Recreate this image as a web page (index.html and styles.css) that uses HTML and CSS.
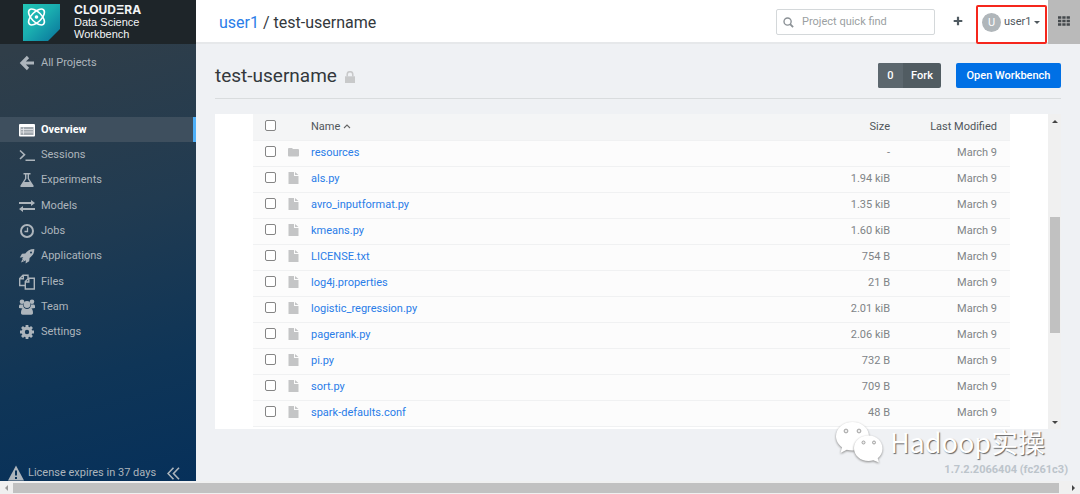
FILE: index.html
```html
<!DOCTYPE html>
<html lang="en">
<head>
<meta charset="utf-8">
<title>test-username - Cloudera Data Science Workbench</title>
<link rel="stylesheet" href="styles.css">
</head>
<body>
<div class="app">
  <aside class="sidebar">
    <div class="brand">
      <svg class="brand-logo" viewBox="0 0 37 37" aria-hidden="true">
        <defs><linearGradient id="lg" x1="0" y1="0" x2="1" y2="1"><stop offset="0" stop-color="#22c5b5"/><stop offset=".45" stop-color="#1aaeb0"/><stop offset="1" stop-color="#08729a"/></linearGradient></defs>
        <path d="M0 0h37v25L25 37H0z" fill="url(#lg)"/>
        <g fill="none" stroke="#fff" stroke-width="1.6">
          <ellipse cx="13.500" cy="13" rx="10" ry="5" transform="rotate(45 13.5 13)"/>
          <ellipse cx="13.500" cy="13" rx="10" ry="5" transform="rotate(-45 13.5 13)"/>
        </g>
        <circle cx="13.500" cy="13" r="1.800" fill="#fff"/>
      </svg>
      <div class="brand-text"><strong>CLOUDΞRA</strong><span>Data Science</span><span>Workbench</span></div>
    </div>
    <a class="nav-link all-projects" href="#">
      <svg class="icon" viewBox="0 0 16 16"><path d="M9 2L3 8l6 6M3.500 8H15" fill="none" stroke="currentColor" stroke-width="3.200"/></svg>All Projects</a>
    <nav class="nav">
      <a class="nav-link active" href="#"><svg class="icon" viewBox="0 0 16 16"><rect y="2" width="16" height="12.500" rx="1" fill="#fff"/><path d="M1.500 5h13v8h-13z" fill="#a2a9af"/><path d="M2 7.500h12M2 10h12M4.500 5.500v7" stroke="#e8eaec" stroke-width=".8"/></svg>Overview</a>
      <a class="nav-link" href="#"><svg class="icon" viewBox="0 0 16 16"><path d="M1 3.500l4.500 4.200L1 12M6.500 13.200H16" fill="none" stroke="currentColor" stroke-width="1.600"/></svg>Sessions</a>
      <a class="nav-link" href="#"><svg class="icon" viewBox="0 0 16 16"><path d="M4.500 1h7v1.500H10v4l4.500 7c.5.900 0 1.500-.8 1.500H2.300c-.8 0-1.300-.6-.8-1.500L6 6.500v-4H4.500z" fill="currentColor"/><path d="M7.400 2.500v4.300L5.300 10h5.400L8.600 6.800V2.500z" fill="#213a50"/></svg>Experiments</a>
      <a class="nav-link" href="#"><svg class="icon" viewBox="0 0 16 16"><path d="M0 4h12V2l4 3-4 3V6H0zM16 10H4V8l-4 3 4 3v-2h12z" fill="currentColor"/></svg>Models</a>
      <a class="nav-link" href="#"><svg class="icon" viewBox="0 0 16 16"><circle cx="8" cy="8" r="6" fill="none" stroke="currentColor" stroke-width="2"/><path d="M8.500 4.500v4H5.500" fill="none" stroke="currentColor" stroke-width="1.300"/></svg>Jobs</a>
      <a class="nav-link" href="#"><svg class="icon" viewBox="0 0 16 16"><path d="M15.300 1c-4.500 0-7 2-9 4.500L3 5.800.8 9.500l3.500-.3L3 11l2.300 2.200 1.600-1-.3 3.300 3.600-2.200.4-3.400C13.500 7.800 15.500 5.500 15.300 1z" fill="currentColor"/><path d="M3.300 11.500L2 14.600l3-1.400z" fill="currentColor"/><circle cx="12" cy="4.500" r="1" fill="#1b3a56"/></svg>Applications</a>
      <a class="nav-link" href="#"><svg class="icon" viewBox="0 0 16 16"><path d="M6 11.500H.7V4.500L4 1.200h5v3M4.300 1.200v3.600H.8M6.300 15V7.500l3.200-3.200h5.800V15zM9.800 4.500V8H6.500" fill="none" stroke="currentColor" stroke-width="1.400"/></svg>Files</a>
      <a class="nav-link" href="#"><svg class="icon" viewBox="0 0 16 16"><g fill="currentColor"><circle cx="3" cy="2.800" r="2.300"/><circle cx="13" cy="2.800" r="2.300"/><circle cx="8" cy="5.500" r="3.400"/><path d="M0 9V7c0-1 .7-1.600 1.500-1.600h2.600c0 1.700.5 2.600 1.200 3.400L3.500 9.400zM16 9V7c0-1-.7-1.600-1.500-1.600h-2.600c0 1.700-.5 2.600-1.200 3.400l1.800.6zM2 14c0-3 .7-5 3.300-5 1.500 1.200 3.900 1.200 5.400 0C13.300 9 14 11 14 14c0 1-.7 1.700-1.700 1.700H3.700C2.700 15.700 2 15 2 14z"/></g></svg>Team</a>
      <a class="nav-link" href="#"><svg class="icon" viewBox="0 0 16 16"><circle cx="8" cy="8" r="3.800" fill="none" stroke="currentColor" stroke-width="3.200"/><path d="M8 1v2.500M8 12.500V15M1 8h2.500M12.500 8H15M3 3l1.800 1.800M11.200 11.200L13 13M13 3l-1.800 1.800M4.800 11.200L3 13" stroke="currentColor" stroke-width="2.800"/></svg>Settings</a>
    </nav>
    <div class="license">
      <svg class="icon" viewBox="0 0 16 16"><path d="M8 .5l8 15H0z" fill="currentColor"/><path d="M8 5.500v5M8 12v2" stroke="#0b3358" stroke-width="2"/></svg>
      <span>License expires in 37 days</span>
      <button class="collapse" aria-label="Collapse sidebar"><svg viewBox="0 0 13 13"><path d="M6.500 .7L1 6.500l5.500 5.800M12 .7L6.500 6.500 12 12.300" fill="none" stroke="currentColor" stroke-width="1.600"/></svg></button>
    </div>
  </aside>

  <div class="content">
    <header class="topbar">
      <div class="crumbs"><a href="#">user1</a> / test-username</div>
      <label class="search">
        <svg viewBox="0 0 12 12" aria-hidden="true"><circle cx="5" cy="5" r="3.900" fill="none" stroke="#8b9196" stroke-width="1.500"/><path d="M7.800 7.800L11 11" stroke="#8b9196" stroke-width="2"/></svg>
        <input type="text" placeholder="Project quick find" aria-label="Project quick find">
      </label>
      <button class="add" aria-label="Add"><svg viewBox="0 0 10 10"><path d="M5 .7v8.600M.7 5h8.600" stroke="#505b62" stroke-width="2.200"/></svg></button>
      <button class="user"><span class="avatar">U</span><span>user1</span><span class="caret"></span></button>
      <button class="apps" aria-label="Applications menu"><svg viewBox="0 0 12 10"><path d="M0 1.500h12M0 5h12M0 8.500h12" stroke="#454a4d" stroke-width="2.400" stroke-dasharray="3.300 1"/></svg></button>
    </header>

    <main class="main">
      <div class="title-row">
        <h1>test-username</h1>
        <svg class="lock" viewBox="0 0 10 12" aria-label="Private"><path d="M0 5.300h10V12H0z" fill="#c8c9ca"/><path d="M2.200 5.500V3.500a2.800 2.800 0 0 1 5.600 0v2" fill="none" stroke="#c8c9ca" stroke-width="1.500"/></svg>
        <button class="fork"><span class="fork-count">0</span><span class="fork-label">Fork</span></button>
        <button class="primary">Open Workbench</button>
      </div>

      <section class="panel">
        <div class="table-wrap">
          <table class="files">
            <colgroup><col class="c-check"><col class="c-icon"><col><col class="c-size"><col class="c-date"></colgroup>
            <thead><tr><th><input type="checkbox" aria-label="Select all"></th><th></th><th>Name <svg class="sort" viewBox="0 0 8 5"><path d="M1 4l3-3 3 3" fill="none" stroke="#666" stroke-width="1.100"/></svg></th><th class="num">Size</th><th class="num">Last Modified</th></tr></thead>
            <tbody id="rows"></tbody>
          </table>
        </div>
        <div class="vscroll"><span class="arrow up"></span><span class="vthumb"></span><span class="arrow down"></span></div>
      </section>
      <footer class="version">1.7.2.2066404 (fc261c3)</footer>
    </main>
  </div>
</div>
<div class="hscroll"><span class="arrow left"></span><span class="hthumb"></span><span class="arrow right"></span></div>

<div class="watermark">
  <svg viewBox="0 0 48 42" aria-hidden="true">
    <g fill="#fff">
      <path class="bubble" d="M17.500 1C8 1 1 7.300 1 15.300c0 4.600 2.400 8.400 6 11L5.500 32l6.200-3.300c1.800.5 3.800.8 5.800.8 9.300 0 16.500-6.300 16.500-14.200S27 1 17.500 1z"/>
      <path class="bubble" d="M33.500 14.500c-8.300 0-14.500 5.500-14.500 12.700S25.500 40 33.500 40c1.600 0 3.300-.2 4.800-.7l5.700 2.200-1.300-4.200C45.800 35 47.500 31.500 47.500 27.500c0-7.300-6-13-14-13z"/>
    </g>
    <g fill="#eee" stroke="#999" stroke-width=".9"><circle cx="11" cy="10" r="1.900"/><circle cx="24" cy="10" r="1.900"/><circle cx="28.500" cy="21.500" r="1.500"/><circle cx="39" cy="21.500" r="1.500"/></g>
  </svg>
  <span>Hadoop实操</span>
</div>
<script src="files.js"></script>
</body>
</html>
```
FILE: styles.css
```css
* { box-sizing: border-box; }
body { margin: 0; height: 100vh; display: flex; flex-direction: column; overflow: hidden; font: 11px/16px Roboto, "Noto Sans CJK SC", sans-serif; color: #33383c; background: #eff1f4; }
a { color: #2a7de8; text-decoration: none; }
button { border: 0; padding: 0; background: none; font: inherit; color: inherit; }
svg { display: block; flex: none; }
.app { flex: 1; min-height: 0; display: flex; }

.sidebar { width: 196px; flex: none; display: flex; flex-direction: column; color: #adb5bc; background: linear-gradient(165deg, #303e49 10%, #213b51 45%, #0f3557 75%, #06305a); }
.brand { height: 44px; flex: none; display: flex; align-items: center; gap: 14px; padding-left: 23px; background: #1e2529; color: #f2f4f5; }
.brand-logo { width: 37px; height: 37px; }
.brand-text { display: flex; flex-direction: column; font: 11px/12px "Liberation Sans", Arial, sans-serif; }
.brand-text strong { font: 700 12px/12px Inter, sans-serif; }
.nav-link { display: flex; align-items: center; gap: 6px; padding-left: 19px; color: #adb5bc; }
.icon { width: 16px; height: 16px; }
.all-projects { height: 38px; flex: none; }
.nav { margin-top: 35px; height: 228px; display: grid; grid-auto-rows: 1fr; }
.active { background: #3e4f5e; color: #fff; font-weight: 700; border-right: 3px solid #4fb0f8; }
.license { margin-top: auto; height: 16px; display: flex; align-items: center; gap: 4px; padding-left: 8px; line-height: 18px; }
.collapse { margin-left: 7px; }
.collapse svg { width: 13px; height: 13px; }

.content { flex: 1; min-width: 0; display: flex; flex-direction: column; }
.topbar { height: 44px; flex: none; display: flex; align-items: center; background: #fff; border-bottom: 2px solid #e6e8ea; }
.crumbs { flex: 1; padding: 3px 0 0 23px; font-size: 16px; line-height: 20px; }
.search { width: 159px; height: 26px; display: flex; align-items: center; gap: 8px; margin-top: 2px; padding: 0 6px; border: 1px solid #d4d8da; border-radius: 2px; }
.search svg { width: 11px; height: 11px; }
.search input { flex: 1; min-width: 0; border: 0; padding: 0; outline: 0; font: inherit; }
.search input::placeholder { color: #9b9fa2; }
.add { margin: 0 13px 0 18px; }
.add svg { width: 10px; height: 10px; }
.user { align-self: flex-start; position: relative; z-index: 1; margin: 5px 1px 0 0; width: 71px; height: 39px; flex: none; display: flex; align-items: center; gap: 3px; padding: 0 0 5px 4px; border: 2px solid #f5261c; border-radius: 2px; color: #50585e; }
.avatar { width: 19px; height: 19px; border-radius: 50%; background: #b0b6ba; color: #fff; line-height: 19px; text-align: center; }
.caret { border: 3px solid transparent; border-top-color: #50585e; border-bottom: 0; }
.apps { align-self: stretch; width: 32px; margin-bottom: -2px; padding-bottom: 2px; background: #bababa; display: grid; place-items: center; }
.apps svg { width: 12px; height: 10px; }

.main { flex: 1; min-height: 0; display: flex; flex-direction: column; padding: 0 19px; }
.title-row { height: 55px; flex: none; display: flex; align-items: center; padding-top: 9px; border-bottom: 1px solid #d9dcde; }
h1 { margin: 0; font-size: 19px; line-height: 24px; font-weight: 400; }
.lock { width: 10px; height: 12px; margin: 2px auto 0 8px; }
.fork, .primary { height: 25px; border-radius: 2px; color: #fff; font-weight: 500; }
.fork { display: flex; overflow: hidden; line-height: 25px; background: #515c62; margin-right: 15px; }
.fork-count { width: 25px; background: #5c676e; }
.fork-label { width: 38px; }
.primary { width: 105px; background: #0070e5; }
.panel { flex: none; margin-top: 15px; display: flex; background: #fff; }
.table-wrap { flex: 1; min-width: 0; padding: 0 38px 2px; }
.files { width: 100%; border-collapse: collapse; table-layout: fixed; background: #fcfcfc; }
.files th, .files td { height: 26px; padding: 0; border-bottom: 1px solid #f0f1f2; text-align: left; line-height: 16px; font-weight: 400; }
.files th { background: #f4f5f6; color: #50565a; }
.files .num { text-align: right; }
.files td.num { color: #808487; }
.files .num:last-child { padding-right: 13px; }
.files th:first-child, .files td:first-child { padding: 0 0 3px 12px; }
.files input { display: block; margin: 0; width: 11px; height: 11px; appearance: none; border: 1px solid #858585; border-radius: 2px; background: #fff; }
.files td svg { width: 11px; height: 12px; margin-bottom: 2px; }
.files .sort { display: inline-block; width: 8px; height: 5px; vertical-align: 1px; }
.c-check { width: 35px; }
.c-icon { width: 23px; }
.c-size { width: 110px; }
.c-date { width: 120px; }
.vscroll { width: 13px; display: flex; flex-direction: column; align-items: center; background: #f0f0f0; padding: 6px 0 5px; }
.vthumb { width: 10px; height: 116px; margin: auto 0 88px; background: #c1c1c1; }
.arrow { border: 3px solid transparent; }
.up { border-top: 0; border-bottom-color: #444; }
.down { border-bottom: 0; border-top-color: #444; }
.left { border-left: 0; border-right-color: #999; }
.right { border-right: 0; border-left-color: #444; }
.version { margin-top: auto; margin-right: -7px; padding-bottom: 3px; text-align: right; font-weight: 700; color: #bcc4cb; }
.hscroll { height: 13px; flex: none; display: flex; align-items: center; justify-content: space-between; gap: 5px; padding: 0 5px; background: #f0f0f0; }
.hthumb { flex: 1; height: 10px; margin-right: 8px; background: #c1c1c1; }
.watermark { position: absolute; right: 35px; bottom: 31px; display: flex; align-items: center; gap: 7px; color: #fff; font: 27px/36px "Noto Sans CJK SC", sans-serif; text-shadow: 1px 1px 1px #666; }
.watermark svg { width: 48px; height: 42px; overflow: visible; }
.bubble { filter: drop-shadow(0 1px 1px #888); }
```
FILE: files.js
```js
const files = [
  ["resources", "-"],
  ["als.py", "1.94 kiB"],
  ["avro_inputformat.py", "1.35 kiB"],
  ["kmeans.py", "1.60 kiB"],
  ["LICENSE.txt", "754 B"],
  ["log4j.properties", "21 B"],
  ["logistic_regression.py", "2.01 kiB"],
  ["pagerank.py", "2.06 kiB"],
  ["pi.py", "732 B"],
  ["sort.py", "709 B"],
  ["spark-defaults.conf", "48 B"]
];
const folderIcon = '<svg viewBox="0 0 11 12"><path d="M0 3Q0 2 1 2h3l1 1h5q1 0 1 1v5.500q0 1-1 1H1q-1 0-1-1z" fill="#c4c5c6"/></svg>';
const fileIcon = '<svg viewBox="0 0 11 12"><path d="M.5 0H6v4h4.500v8H.5zM7 0l3.500 3H7z" fill="#c4c5c6"/></svg>';
document.getElementById("rows").innerHTML = files.map(([name, size], i) =>
  `<tr><td><input type="checkbox" aria-label="Select ${name}"></td><td>${i ? fileIcon : folderIcon}</td><td><a href="#">${name}</a></td><td class="num">${size}</td><td class="num">March 9</td></tr>`
).join("");
```
